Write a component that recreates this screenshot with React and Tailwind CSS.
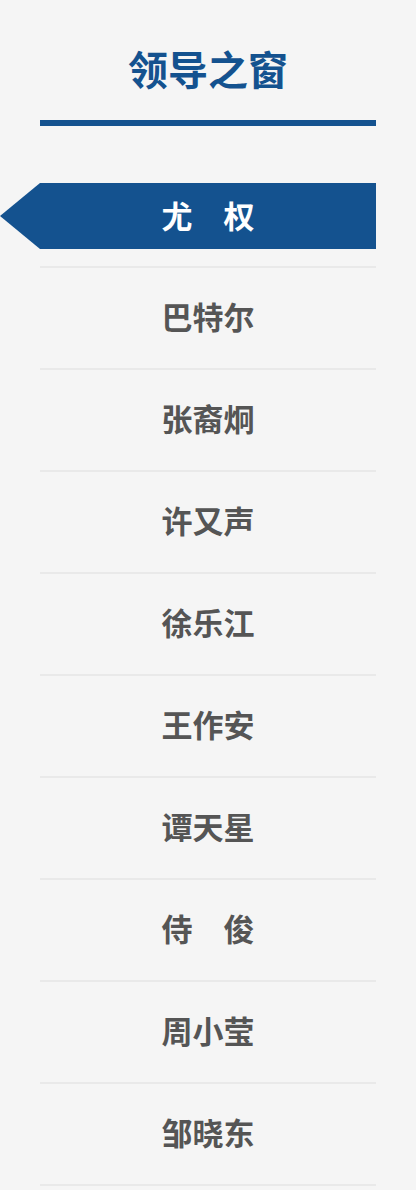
const LEADERS = ['尤　权', '巴特尔', '张裔炯', '许又声', '徐乐江', '王作安', '谭天星', '侍　俊', '周小莹', '邹晓东']

export default function App() {
  const active = 0

  return (
    <div
      className="w-[416px] min-h-[1190px] bg-[#f5f5f5] px-10"
      style={{ fontFamily: '"Noto Sans CJK SC", "Noto Sans", sans-serif' }}
    >
      {/* Title */}
      <div className="pt-[46px] h-[120px]">
        <h1 className="text-center text-[40px] leading-[44px] font-bold text-[#14528f]">领导之窗</h1>
      </div>
      <div className="h-[6px] bg-[#14528f]" />

      {/* List */}
      <ul className="mt-[40px]">
        {LEADERS.map((name, i) => (
          <li key={name} className="h-[102px] border-b-2 border-[#e9e9e9] flex items-center">
            {i === active ? (
              <div className="relative w-full h-[66px] bg-[#14528f] flex items-center justify-center">
                <span className="absolute left-[-40px] top-0 w-0 h-0 border-y-[33px] border-y-transparent border-r-[40px] border-r-[#14528f]" />
                <span className="text-white text-[31px] font-bold leading-none pb-[4px]">{name}</span>
              </div>
            ) : (
              <div className="w-full text-center text-[31px] font-bold leading-none text-[#555555] pb-[6px]">{name}</div>
            )}
          </li>
        ))}
      </ul>
    </div>
  )
}
